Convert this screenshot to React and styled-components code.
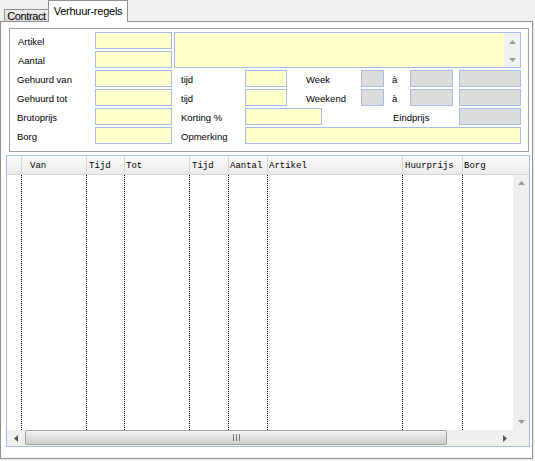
import styled, { createGlobalStyle } from 'styled-components';

const GlobalStyle = createGlobalStyle`
  html, body {
    margin: 0;
    padding: 0;
    background: #f0f0f0;
  }
  body {
    font-family: "Liberation Sans", Arial, sans-serif;
  }
`;

const Window = styled.div`
  width: 535px;
  height: 461px;
  background: #f0f0f0;
  display: flex;
  flex-direction: column;
  overflow: hidden;
`;

const TabStrip = styled.div`
  display: flex;
  align-items: flex-end;
  height: 21px;
  padding-left: 4px;
  position: relative;
  z-index: 1;
`;

const Tab = styled.div`
  box-sizing: border-box;
  display: flex;
  align-items: center;
  justify-content: center;
  font-size: 11px;
  line-height: 11px;
  color: #000;
  border: 1px solid #919191;
  border-bottom: none;
  width: ${(p) => (p.$active ? '80px' : '45px')};
  height: ${(p) => (p.$active ? '22px' : '12px')};
  margin-bottom: ${(p) => (p.$active ? '-1px' : '0')};
  margin-left: ${(p) => (p.$active ? '-1px' : '0')};
  padding-top: ${(p) => (p.$active ? '0' : '1px')};
  background: ${(p) => (p.$active ? '#fff' : 'linear-gradient(#ececec, #dcdcdc)')};
  white-space: nowrap;
  letter-spacing: ${(p) => (p.$active ? '-0.25px' : '-0.4px')};
`;

const Panel = styled.div`
  box-sizing: border-box;
  width: 533px;
  height: 438px;
  background: #fff;
  border: 1px solid #919191;
  display: flex;
  flex-direction: column;
`;

const GroupBox = styled.div`
  box-sizing: border-box;
  width: 520px;
  height: 124px;
  margin: 6px 0 0 8px;
  border: 1px solid #a0a0a0;
  padding-top: 3px;
`;

const FormGrid = styled.div`
  display: grid;
  grid-template-columns: 85px 77px 2px 71px 42px 35px 39px 23px 26px 43px 6px 62px;
  grid-template-rows: repeat(6, 17px);
  row-gap: 2px;
  font-family: "Liberation Sans", Arial, sans-serif;
  font-size: 9.5px;
  color: #000;
`;

const Label = styled.div`
  grid-column: ${(p) => p.$col};
  grid-row: ${(p) => p.$row};
  display: flex;
  align-items: center;
  padding-left: ${(p) => p.$pad ?? 7}px;
  padding-top: 2px;
  white-space: nowrap;
`;

const Field = styled.div`
  grid-column: ${(p) => p.$col};
  grid-row: ${(p) => p.$row};
  box-sizing: border-box;
  border: 1px solid #a4bde9;
  background: ${(p) => (p.$gray ? '#dcdcdc' : '#ffffcc')};
  display: flex;
  justify-content: flex-end;
`;

const TextScroll = styled.div`
  width: 16px;
  background: #f0f0f0;
  display: flex;
  flex-direction: column;
  justify-content: space-between;
  align-items: center;
  padding: 7px 0 5px;
`;

const Table = styled.div`
  box-sizing: border-box;
  width: 524px;
  height: 292px;
  margin: 3px 0 0 5px;
  border: 1px solid #a4bde9;
  display: flex;
  flex-direction: column;
`;

const HeaderRow = styled.div`
  display: flex;
  height: 18px;
  border-bottom: 1px solid #d6d6d6;
  background: linear-gradient(#fbfbfb, #ebebeb);
  font-family: "Liberation Mono", "DejaVu Sans Mono", monospace;
  font-size: 9px;
  color: #000;
`;

const HeaderCell = styled.div`
  box-sizing: border-box;
  width: ${(p) => (p.$w ? `${p.$w}px` : 'auto')};
  flex: ${(p) => (p.$w ? '0 0 auto' : '1')};
  border-right: ${(p) => (p.$w ? '1px solid #d6d6d6' : 'none')};
  padding-left: ${(p) => p.$pad}px;
  display: flex;
  align-items: center;
  padding-top: 1px;
  white-space: nowrap;
  overflow: hidden;
`;

const Body = styled.div`
  display: flex;
  height: 255px;
`;

const Columns = styled.div`
  flex: 1;
  display: flex;
  overflow: hidden;
`;

const Column = styled.div`
  box-sizing: border-box;
  width: ${(p) => (p.$w ? `${p.$w}px` : 'auto')};
  flex: ${(p) => (p.$w ? '0 0 auto' : '1')};
  border-right: ${(p) => (p.$w ? '1px dotted #000' : 'none')};
`;

const VScroll = styled.div`
  width: 16px;
  background: #efefef;
  display: flex;
  flex-direction: column;
  justify-content: space-between;
  align-items: center;
  padding: 6px 0 6px;
  box-sizing: border-box;
`;

const HScroll = styled.div`
  height: 16px;
  display: flex;
  background: #efefef;
`;

const ScrollButton = styled.div`
  width: ${(p) => p.$w}px;
  display: flex;
  align-items: center;
  justify-content: center;
`;

const Thumb = styled.div`
  box-sizing: border-box;
  width: 422px;
  height: 15px;
  border: 1px solid #a2a2a2;
  border-radius: 2px;
  background: linear-gradient(#f6f6f6, #dedede 50%, #cfcfcf);
  display: flex;
  align-items: center;
  justify-content: center;
`;

const Track = styled.div`
  flex: 1;
`;

const Corner = styled.div`
  width: 16px;
  background: #f0f0f0;
`;

const Arrow = ({ dir, color = '#8c8c8c' }) => {
  const pts = {
    up: '0,4 3.5,0 7,4',
    down: '0,0 7,0 3.5,4',
    left: '4,0 4,7 0,3.5',
    right: '0,0 0,7 4,3.5',
  }[dir];
  const horiz = dir === 'left' || dir === 'right';
  return (
    <svg width={horiz ? 4 : 7} height={horiz ? 7 : 4} viewBox={horiz ? '0 0 4 7' : '0 0 7 4'}>
      <polygon points={pts} fill={color} />
    </svg>
  );
};

const Grip = () => (
  <svg width="7" height="7" viewBox="0 0 7 7">
    <rect x="0" y="0" width="1" height="7" fill="#7a7a7a" />
    <rect x="3" y="0" width="1" height="7" fill="#7a7a7a" />
    <rect x="6" y="0" width="1" height="7" fill="#7a7a7a" />
  </svg>
);

const columns = [
  { w: 15, label: '', pad: 0 },
  { w: 65, label: 'Van', pad: 8 },
  { w: 38, label: 'Tijd', pad: 2 },
  { w: 65, label: 'Tot', pad: 1 },
  { w: 39, label: 'Tijd', pad: 2 },
  { w: 39, label: 'Aantal', pad: 1 },
  { w: 135, label: 'Artikel', pad: 1 },
  { w: 60, label: 'Huurprijs', pad: 2 },
  { w: 0, label: 'Borg', pad: 1 },
];

function App() {
  return (
    <>
      <GlobalStyle />
      <Window>
        <TabStrip>
          <Tab>Contract</Tab>
          <Tab $active>Verhuur-regels</Tab>
        </TabStrip>
        <Panel>
          <GroupBox>
            <FormGrid>
              <Label $col="1" $row="1" $pad={8}>Artikel</Label>
              <Field $col="2" $row="1" />
              <Field $col="4 / 13" $row="1 / 3">
                <TextScroll>
                  <Arrow dir="up" color="#9a9a9a" />
                  <Arrow dir="down" color="#9a9a9a" />
                </TextScroll>
              </Field>

              <Label $col="1" $row="2" $pad={8}>Aantal</Label>
              <Field $col="2" $row="2" />

              <Label $col="1" $row="3">Gehuurd van</Label>
              <Field $col="2" $row="3" />
              <Label $col="4" $row="3">tijd</Label>
              <Field $col="5" $row="3" />
              <Label $col="6 / 8" $row="3" $pad={19}>Week</Label>
              <Field $col="8" $row="3" $gray />
              <Label $col="9" $row="3" $pad={8}>à</Label>
              <Field $col="10" $row="3" $gray />
              <Field $col="12" $row="3" $gray />

              <Label $col="1" $row="4">Gehuurd tot</Label>
              <Field $col="2" $row="4" />
              <Label $col="4" $row="4">tijd</Label>
              <Field $col="5" $row="4" />
              <Label $col="6 / 8" $row="4" $pad={19}>Weekend</Label>
              <Field $col="8" $row="4" $gray />
              <Label $col="9" $row="4" $pad={8}>à</Label>
              <Field $col="10" $row="4" $gray />
              <Field $col="12" $row="4" $gray />

              <Label $col="1" $row="5">Brutoprijs</Label>
              <Field $col="2" $row="5" />
              <Label $col="4" $row="5">Korting %</Label>
              <Field $col="5 / 7" $row="5" />
              <Label $col="9 / 12" $row="5" $pad={9}>Eindprijs</Label>
              <Field $col="12" $row="5" $gray />

              <Label $col="1" $row="6">Borg</Label>
              <Field $col="2" $row="6" />
              <Label $col="4" $row="6">Opmerking</Label>
              <Field $col="5 / 13" $row="6" />
            </FormGrid>
          </GroupBox>

          <Table>
            <HeaderRow>
              {columns.map((c, i) => (
                <HeaderCell key={i} $w={c.w} $pad={c.pad}>
                  {c.label}
                </HeaderCell>
              ))}
            </HeaderRow>
            <Body>
              <Columns>
                {columns.map((c, i) => (
                  <Column key={i} $w={c.w} />
                ))}
              </Columns>
              <VScroll>
                <Arrow dir="up" color="#9a9a9a" />
                <Arrow dir="down" color="#9a9a9a" />
              </VScroll>
            </Body>
            <HScroll>
              <ScrollButton $w={18}>
                <Arrow dir="left" color="#555" />
              </ScrollButton>
              <Thumb>
                <Grip />
              </Thumb>
              <Track />
              <ScrollButton $w={16}>
                <Arrow dir="right" color="#555" />
              </ScrollButton>
              <Corner />
            </HScroll>
          </Table>
        </Panel>
      </Window>
    </>
  );
}

export default App;
